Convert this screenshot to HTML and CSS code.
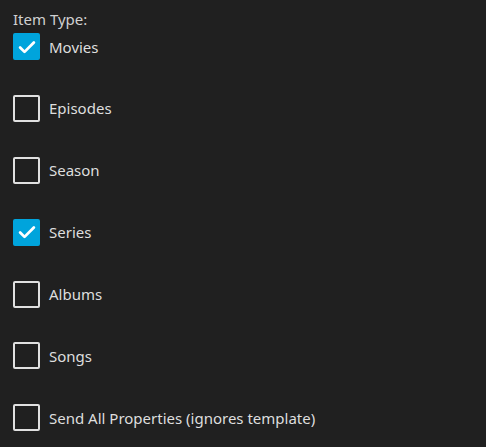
FILE: index.html
```html
<!DOCTYPE html>
<html>
<head>
<meta charset="utf-8">
<link rel="stylesheet" href="styles.css">
</head>
<body>
<div class="panel">
  <div class="heading">Item Type:</div>
  <div class="list">
    <label class="row"><span class="box checked"><svg viewBox="0 0 24 24"><path d="M4.5 12.5l4.8 4.8L19.5 7"/></svg></span><span class="text">Movies</span></label>
    <label class="row"><span class="box"></span><span class="text">Episodes</span></label>
    <label class="row"><span class="box"></span><span class="text">Season</span></label>
    <label class="row"><span class="box checked"><svg viewBox="0 0 24 24"><path d="M4.5 12.5l4.8 4.8L19.5 7"/></svg></span><span class="text">Series</span></label>
    <label class="row"><span class="box"></span><span class="text">Albums</span></label>
    <label class="row"><span class="box"></span><span class="text">Songs</span></label>
    <label class="row"><span class="box"></span><span class="text">Send All Properties (ignores template)</span></label>
  </div>
</div>
</body>
</html>
```

FILE: styles.css
```css
html, body {
  margin: 0;
  padding: 0;
  background: #202020;
  height: 100%;
}
body {
  font-family: "Noto Sans", "Open Sans", sans-serif;
  color: rgba(255,255,255,0.87);
}
.panel {
  padding: 10px 13px 0 13px;
}
.heading {
  font-size: 15px;
  line-height: 18px;
  color: #d0d0d0;
}
.list {
  display: flex;
  flex-direction: column;
  gap: 34.9px;
  margin-top: 5px;
}
.row {
  display: flex;
  align-items: center;
  gap: 9px;
  height: 27px;
}
.box {
  box-sizing: border-box;
  width: 27px;
  height: 27px;
  border: 2px solid #e0e0e0;
  border-radius: 2px;
  display: flex;
  align-items: center;
  justify-content: center;
}
.box.checked {
  background: #00a4dc;
  border-color: #00a4dc;
}
.box svg {
  width: 22px;
  height: 22px;
  fill: none;
  stroke: #fff;
  stroke-width: 3;
  stroke-linecap: round;
  stroke-linejoin: round;
}
.text {
  font-size: 15px;
  color: #dedede;
}
```
